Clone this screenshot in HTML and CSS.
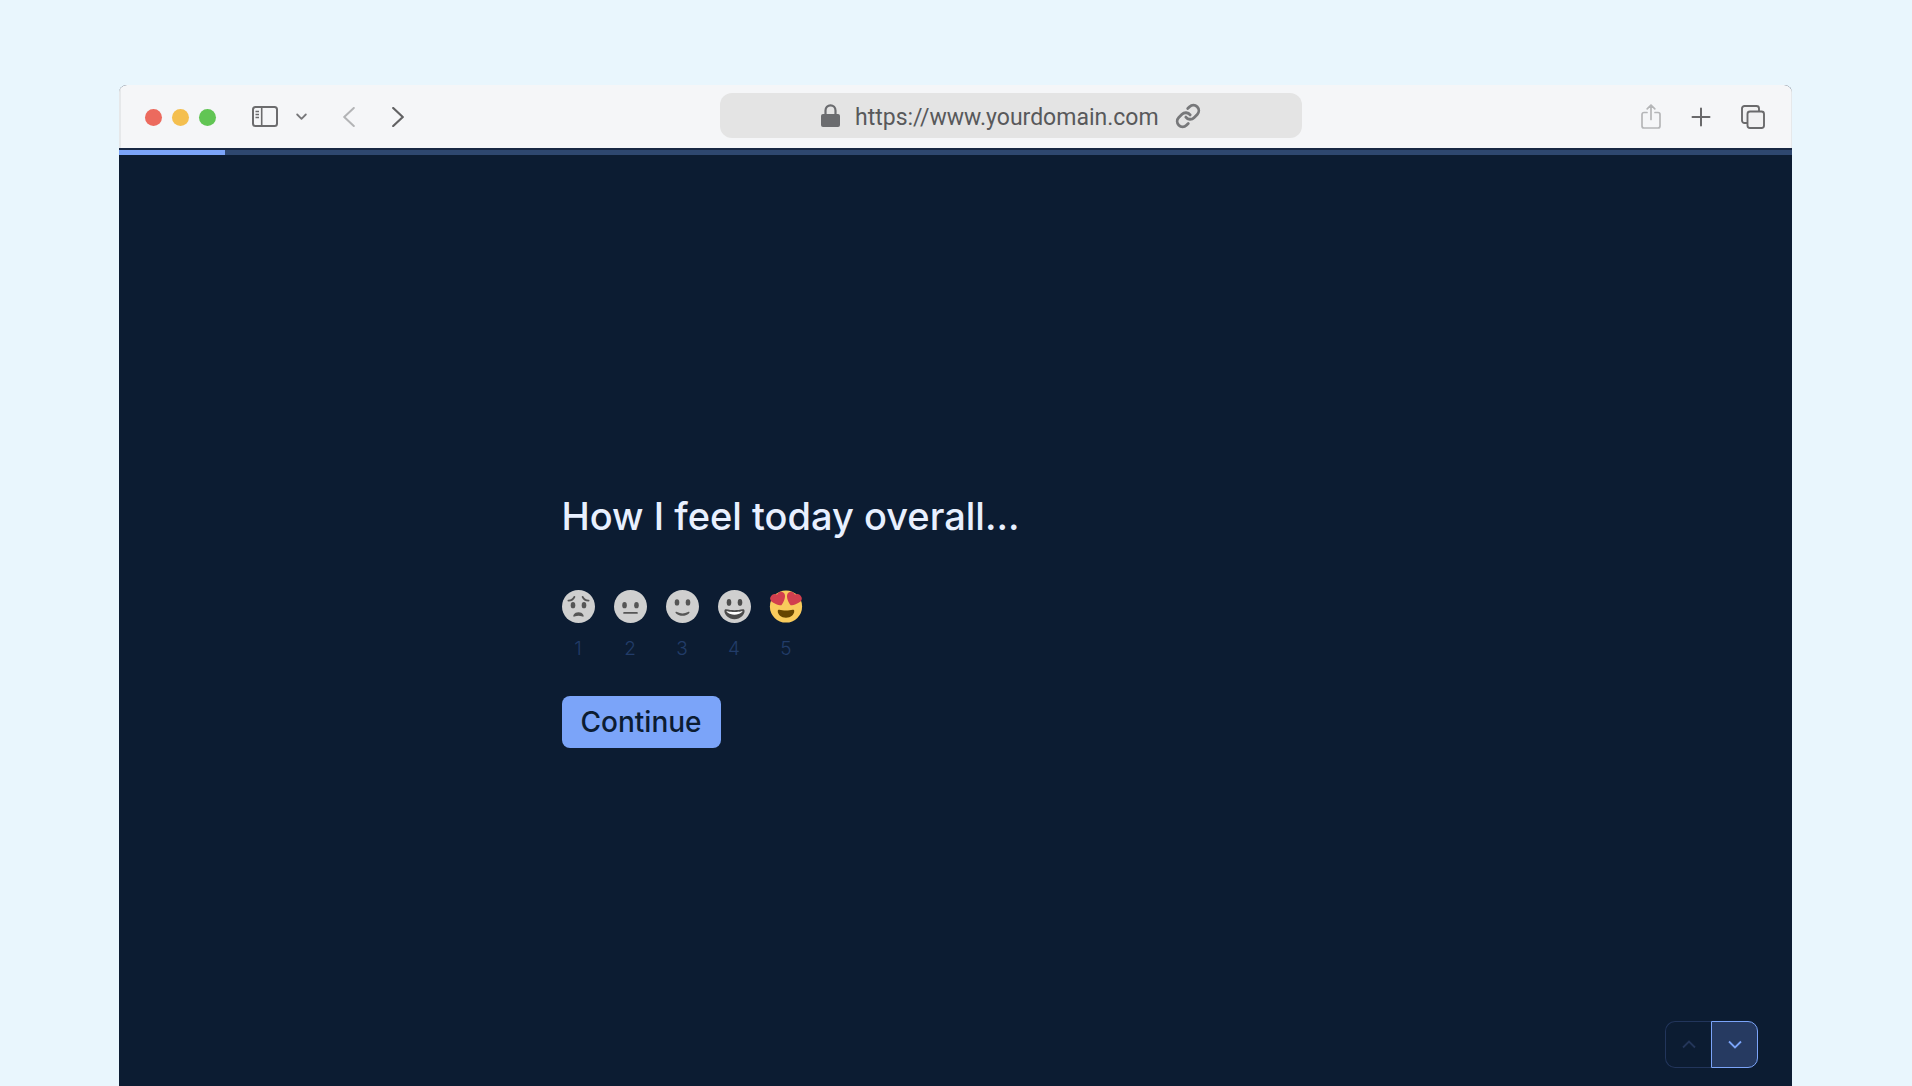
FILE: index.html
```html
<!DOCTYPE html>
<html lang="en">
<head>
<meta charset="utf-8">
<meta name="viewport" content="width=device-width, initial-scale=1">
<title>How I feel today overall...</title>
<link rel="stylesheet" href="styles.css">
</head>
<body>
<div class="window">
  <header class="toolbar">
    <div class="toolbar-left">
      <div class="lights">
        <span class="light light-close"></span>
        <span class="light light-minimize"></span>
        <span class="light light-zoom"></span>
      </div>
      <div class="sidebar-tools">
        <button class="tool" type="button" aria-label="Sidebar">
          <svg width="26" height="21" viewBox="0 0 26 21" fill="none" stroke="#6c6c6e" stroke-width="2"><rect x="1" y="1" width="24" height="19" rx="2.5"/><path d="M9.700 1v19" stroke-width="1.600"/><path d="M3.500 5.500h3.500M3.500 8.500h3.500M3.500 11.500h3.500" stroke-width="1.500"/></svg>
        </button>
        <button class="tool" type="button" aria-label="Sidebar options">
          <svg width="11" height="8" viewBox="0 0 11 8" fill="none" stroke="#77777a" stroke-width="1.800" stroke-linecap="round" stroke-linejoin="round"><path d="M1.200 1.500l4.300 4.300 4.300-4.300"/></svg>
        </button>
      </div>
      <div class="history">
        <button class="tool" type="button" aria-label="Back">
          <svg width="12" height="20" viewBox="0 0 12 20" fill="none" stroke="#b3b4b6" stroke-width="2" stroke-linecap="round" stroke-linejoin="round"><path d="M10.800 1L1.200 10l9.600 9"/></svg>
        </button>
        <button class="tool" type="button" aria-label="Forward">
          <svg width="12" height="20" viewBox="0 0 12 20" fill="none" stroke="#626264" stroke-width="2.200" stroke-linecap="round" stroke-linejoin="round"><path d="M1.200 1l9.600 9-9.600 9"/></svg>
        </button>
      </div>
    </div>
    <div class="address">
      <svg width="19" height="24" viewBox="0 0 19 24"><rect x="0" y="10" width="19" height="13" rx="2" fill="#6b6c6f"/><path d="M4.500 11V6.500a5 5.200 0 0 1 10 0V11" fill="none" stroke="#6b6c6f" stroke-width="2.200"/></svg>
      <input class="url" type="text" value="https://www.yourdomain.com" aria-label="Address">
      <svg width="26" height="26" viewBox="0 0 24 24" fill="none" stroke="#77787a" stroke-width="2.600" stroke-linecap="round" stroke-linejoin="round"><path d="M10 13a5 5 0 0 0 7.540.54l3-3a5 5 0 0 0-7.070-7.070l-1.720 1.710"/><path d="M14 11a5 5 0 0 0-7.540-.54l-3 3a5 5 0 0 0 7.070 7.070l1.710-1.710"/></svg>
    </div>
    <div class="toolbar-right">
      <button class="tool" type="button" aria-label="Share">
        <svg width="20" height="25" viewBox="0 0 20 25" fill="none" stroke="#b5b6b8" stroke-width="1.700" stroke-linecap="round" stroke-linejoin="round"><path d="M6 8.500H3a2 2 0 0 0-2 2V22a2 2 0 0 0 2 2h14a2 2 0 0 0 2-2V10.500a2 2 0 0 0-2-2h-3M10 15.500V1.200M6.200 4.800L10 1l3.800 3.800"/></svg>
      </button>
      <button class="tool" type="button" aria-label="New tab">
        <svg width="20" height="20" viewBox="0 0 20 20" fill="none" stroke="#69696b" stroke-width="2" stroke-linecap="round"><path d="M10 1.500v17M1.500 10h17"/></svg>
      </button>
      <button class="tool" type="button" aria-label="Tab overview">
        <svg width="24" height="24" viewBox="0 0 24 24" fill="#f1f1f2" stroke="#6a6a6c" stroke-width="1.900"><rect x="1" y="1" width="17" height="17" rx="2.500"/><rect x="6.500" y="6.500" width="16.500" height="16.500" rx="2.500"/></svg>
      </button>
    </div>
  </header>
  <div class="progress" role="progressbar" aria-label="Survey progress" aria-valuemin="0" aria-valuemax="100" aria-valuenow="6">
    <div class="progress-fill" style="width: 6.35%"></div>
  </div>
  <main class="stage">
    <form class="question">
      <h1 class="title" id="title">How I feel today overall...</h1>
      <div class="ratings" role="radiogroup" aria-labelledby="title">
        <label class="rating">
          <input class="rating-input" type="radio" name="mood" value="1">
          <svg width="33" height="33" viewBox="0 0 36 36"><circle cx="18" cy="18" r="18" fill="#cfcfcf"/><g fill="#555"><ellipse cx="12" cy="16.500" rx="2.500" ry="3.500"/><ellipse cx="24" cy="16.500" rx="2.500" ry="3.500"/><path d="M12.500 29c-.7-.6.6-4.800 5.500-4.800s6.200 4.200 5.500 4.800c-.8.600-1.900-.8-5.500-.8s-4.700 1.400-5.500.8z"/></g><path d="M7 11.500c3 0 5.500-1.500 6.500-4M29 11.500c-3 0-5.500-1.500-6.500-4" fill="none" stroke="#555" stroke-width="2" stroke-linecap="round"/></svg>
          <span class="rating-number">1</span>
        </label>
        <label class="rating">
          <input class="rating-input" type="radio" name="mood" value="2">
          <svg width="33" height="33" viewBox="0 0 36 36"><circle cx="18" cy="18" r="18" fill="#cfcfcf"/><g fill="#555"><ellipse cx="11.500" cy="16.500" rx="2.500" ry="3.500"/><ellipse cx="24.500" cy="16.500" rx="2.500" ry="3.500"/><rect x="10" y="24" width="16" height="2" rx="1"/></g></svg>
          <span class="rating-number">2</span>
        </label>
        <label class="rating">
          <input class="rating-input" type="radio" name="mood" value="3">
          <svg width="33" height="33" viewBox="0 0 36 36"><circle cx="18" cy="18" r="18" fill="#cfcfcf"/><g fill="#555"><ellipse cx="12" cy="13.500" rx="2.500" ry="3.500"/><ellipse cx="24" cy="13.500" rx="2.500" ry="3.500"/><path d="M10.500 24c-.5.600.1 1.200.5 1.500 2 1.800 4.500 2.500 7 2.500s5-.7 7-2.500c.4-.3 1-.9.500-1.500-.4-.6-1.200-.1-1.500 0-2 1-4 1.500-6 1.500s-4-.5-6-1.500c-.3-.1-1.100-.6-1.500 0z"/></g></svg>
          <span class="rating-number">3</span>
        </label>
        <label class="rating">
          <input class="rating-input" type="radio" name="mood" value="4">
          <svg width="33" height="33" viewBox="0 0 36 36"><circle cx="18" cy="18" r="18" fill="#cfcfcf"/><g fill="#4c4c4c"><ellipse cx="12" cy="13.500" rx="2.500" ry="3.800"/><ellipse cx="24" cy="13.500" rx="2.500" ry="3.800"/><path d="M18 22c-3.600 0-6-.4-9-1-.7-.1-2 0-2 2 0 4 4.600 9 11 9s11-5 11-9c0-2-1.300-2.100-2-2-3 .6-5.400 1-9 1z"/></g><path d="M9 23s3 1 9 1 9-1 9-1-2 4-9 4-9-4-9-4z" fill="#fff"/></svg>
          <span class="rating-number">4</span>
        </label>
        <label class="rating">
          <input class="rating-input" type="radio" name="mood" value="5" checked>
          <svg width="34" height="33" viewBox="0 0 38 36"><circle cx="19" cy="18" r="18" fill="#f9cb5c"/><path d="M19 22.500c-3 0-5-.4-7.500-.9-1-.1-1.700.2-1.700 1.700 0 3.500 3.700 7.200 9.200 7.200s9.200-3.700 9.200-7.200c0-1.500-.7-1.800-1.700-1.700-2.500.5-4.500.9-7.500.9z" fill="#664500"/><g fill="#d23f4e"><path id="heart" d="M17.600 4.600c-.8-2.300-3.300-3.600-5.700-2.700-1.400.5-2.400 1.600-2.800 2.800-1.200-.7-2.700-.8-4-.3C2.700 5.300.6 7.900 1.500 10.300c.1.400.3.700.4 1 1.700 2.800 8.100 5.300 11.900 5.400 2.400-2.900 4.600-8.100 4-11.200 0-.3-.1-.6-.2-.9z"/><use href="#heart" transform="matrix(-1 0 0 1 38 0)"/></g></svg>
          <span class="rating-number">5</span>
        </label>
      </div>
      <button class="continue" type="button">Continue</button>
    </form>
    <nav class="pager" aria-label="Questions">
      <button class="pager-button pager-prev" type="button" aria-label="Previous question" disabled>
        <svg width="14" height="9" viewBox="0 0 14 9" fill="none" stroke="currentColor" stroke-width="1.800"><path d="M1 7.500l6-6 6 6"/></svg>
      </button>
      <button class="pager-button pager-next" type="button" aria-label="Next question">
        <svg width="14" height="9" viewBox="0 0 14 9" fill="none" stroke="currentColor" stroke-width="1.800"><path d="M1 1.500l6 6 6-6"/></svg>
      </button>
    </nav>
  </main>
</div>
</body>
</html>
```
FILE: styles.css
```css
*, *::before, *::after { box-sizing: border-box; }

body {
  margin: 0;
  min-height: 100vh;
  display: flex;
  padding: 85px 120px 0 119px;
  background: #e9f6fd;
  font-family: Inter, "Liberation Sans", sans-serif;
}

button, input { font: inherit; }
svg { display: block; flex: none; }

.window {
  flex: 1;
  min-width: 0;
  display: flex;
  flex-direction: column;
  border-radius: 8px 8px 0 0;
  overflow: hidden;
  background: #0c1c32;
}

/* Browser toolbar */
.toolbar {
  display: grid;
  grid-template-columns: 575fr 582fr 463fr;
  align-items: center;
  height: 63px;
  padding: 0 26px 0 24px;
  background: #f5f6f8;
  border-left: 2px solid #e6e8ea;
  border-right: 1px solid #e6e8ea;
}

.toolbar-left, .toolbar-right, .lights, .sidebar-tools, .history {
  display: flex;
  align-items: center;
}

.toolbar-left { gap: 36px; }
.lights { gap: 10px; padding-top: 2px; }
.sidebar-tools { gap: 18px; }
.history { gap: 37px; }
.toolbar-right { justify-content: flex-end; gap: 30px; }

.light { width: 17px; height: 17px; border-radius: 50%; }
.light-close { background: #ec6a5e; }
.light-minimize { background: #f4bf4f; }
.light-zoom { background: #61c554; }

.tool {
  padding: 0;
  border: 0;
  background: none;
}

.address {
  display: flex;
  align-items: center;
  justify-content: center;
  gap: 10px;
  height: 45px;
  margin-bottom: 2px;
  border-radius: 12px;
  background: #e4e4e4;
}

.url {
  width: 310px;
  height: 28px;
  margin: 4px 0 0 5px;
  padding: 0;
  border: 0;
  background: none;
  color: #58595b;
  font-family: Roboto, sans-serif;
  font-size: 23px;
}

/* Survey progress */
.progress {
  height: 7px;
  border-top: 2px solid #182843;
  background: #2e476f;
}

.progress-fill { height: 100%; background: #7ba4f9; }

/* Question */
.stage {
  position: relative;
  flex: 1;
  display: flex;
  align-items: center;
  justify-content: center;
  padding: 24px 24px 26px;
}

.question {
  width: 100%;
  max-width: 788px;
  display: flex;
  flex-direction: column;
  align-items: flex-start;
}

.title {
  margin: 0 0 50px;
  color: #e8f0ff;
  font-size: 38px;
  font-weight: 500;
  line-height: 48px;
}

.ratings { display: flex; gap: 19px; margin-bottom: 35px; }

.rating {
  width: 33px;
  display: flex;
  flex-direction: column;
  align-items: center;
  gap: 14px;
}

.rating-input {
  position: absolute;
  width: 1px;
  height: 1px;
  margin: 0;
  opacity: 0;
}

.rating-number {
  color: #223c69;
  font-size: 19px;
  font-weight: 300;
  line-height: 24px;
}

.continue {
  height: 52px;
  padding: 0 19px;
  border: 0;
  border-radius: 8px;
  background: #7ba4f9;
  color: #0c1c32;
  font-size: 28px;
  font-weight: 500;
}

/* Previous / next */
.pager {
  position: absolute;
  right: 34px;
  bottom: 18px;
  display: flex;
}

.pager-button {
  display: grid;
  place-items: center;
  width: 47px;
  height: 47px;
  padding: 0;
  border: 1px solid #22355b;
}

.pager-prev {
  width: 46px;
  border-right: 0;
  border-radius: 10px 0 0 10px;
  background: none;
  color: #24365a;
}

.pager-next {
  border-color: #7ba4f9;
  border-radius: 0 10px 10px 0;
  background: #263a61;
  color: #7ba4f9;
}
```
